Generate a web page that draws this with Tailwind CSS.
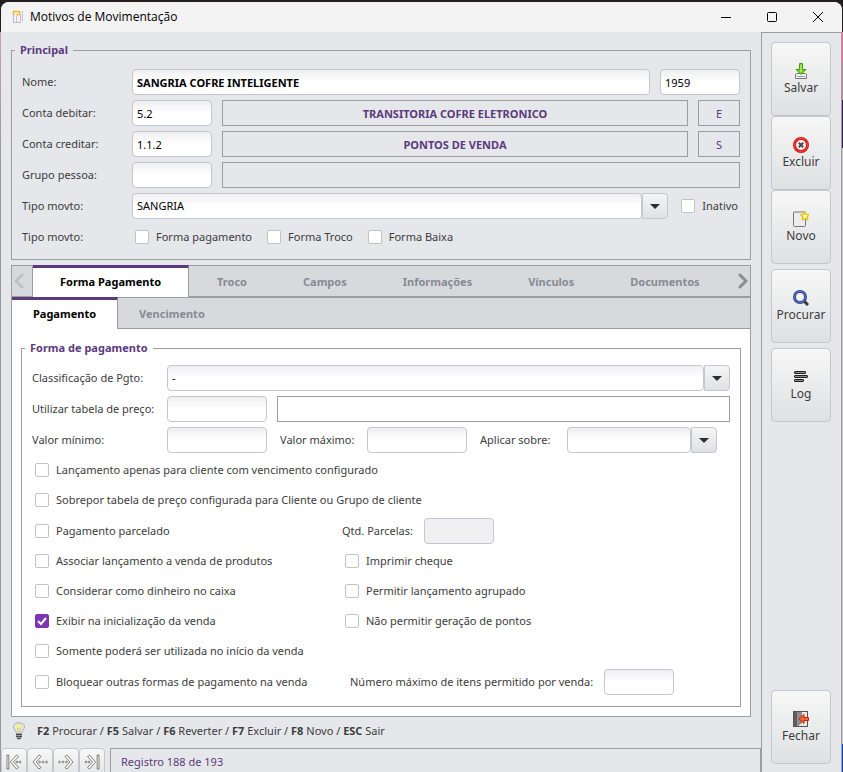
<!DOCTYPE html>
<html lang="pt-BR">
<head>
    <meta charset="UTF-8">
    <meta name="viewport" content="width=device-width, initial-scale=1.0">
    <title>Motivos de Movimentação</title>
    <script src="https://cdn.jsdelivr.net/npm/@tailwindcss/browser@4"></script>
</head>
<body class="flex min-h-screen bg-[#231f20] font-['Noto_Sans',sans-serif] text-[11px] leading-4 text-[#3c3c3c]">

    <!-- Borda esquerda (fundo atrás da janela) -->
    <div class="w-px shrink-0 bg-linear-to-b from-[#231f20] from-[32px] via-[#c9a0a8] via-[32px] to-[#9a9a9e] to-[160px]"></div>

    <div class="mt-0.5 flex min-w-0 flex-1 flex-col overflow-hidden rounded-t-lg bg-[#e6e7eb]">

        <!-- Barra de título -->
        <header class="flex h-[30px] items-center bg-[#f3f3f3] pr-px pl-[11px] text-black">
            <svg class="size-3.5" viewBox="0 0 14 14" fill="none" aria-hidden="true">
                <path d="M1.500 12.500V3.500M1 12.500h8M8.500 12.500V5" stroke="#c3b4d0"/>
                <path d="M1.500 5V1.500h6V4M4.500 4.500h4" stroke="#f5b92e" stroke-width="1.500"/>
                <path d="M4.500 12V5.500M9 1.500l1.500 1.500v8M10.500 1v10.500" stroke="#c9bcd6"/>
            </svg>
            <h1 class="ml-1 flex-1 font-['Open_Sans',sans-serif] text-xs">Motivos de Movimentação</h1>
            <div class="flex">
                <button type="button" aria-label="Minimizar" class="flex h-[30px] w-[46px] items-center justify-center">
                    <svg class="size-3" viewBox="0 0 12 12" stroke="currentColor"><path d="M1 6.500h10"/></svg>
                </button>
                <button type="button" aria-label="Maximizar" class="flex h-[30px] w-[46px] items-center justify-center">
                    <svg class="size-3" viewBox="0 0 12 12" fill="none" stroke="currentColor"><rect x="1.500" y="1.500" width="9" height="9" rx="1"/></svg>
                </button>
                <button type="button" aria-label="Fechar janela" class="flex h-[30px] w-[46px] items-center justify-center">
                    <svg class="size-3" viewBox="0 0 12 12" stroke="currentColor"><path d="M1 1l10 10M11 1L1 11"/></svg>
                </button>
            </div>
        </header>

        <div class="flex flex-1">
            <div class="flex min-w-0 flex-1 flex-col">
                <main class="flex flex-1 flex-col px-2.5 pt-2.5">

                    <!-- Principal -->
                    <fieldset class="min-w-0 border border-[#9d9d9d]">
                        <legend class="ml-[3px] px-[5px] font-bold text-[#5c3a7d]">Principal</legend>
                        <div class="flex flex-col gap-[5px] px-2.5 pt-[11px] pb-[9px]">
                            <div class="flex items-center gap-2.5">
                                <label for="nome" class="w-[100px] shrink-0">Nome:</label>
                                <input id="nome" type="text" value="SANGRIA COFRE INTELIGENTE" class="h-[26px] min-w-0 flex-1 rounded border border-[#c5c6cf] bg-linear-to-b from-[#efeff2] to-white to-50% px-1 font-bold text-black">
                                <input type="text" aria-label="Código" value="1959" class="h-[26px] w-20 rounded border border-[#c5c6cf] bg-linear-to-b from-[#efeff2] to-white to-50% px-1 text-black">
                            </div>
                            <div class="flex items-center gap-2.5">
                                <label for="debitar" class="w-[100px] shrink-0">Conta debitar:</label>
                                <input id="debitar" type="text" value="5.2" class="h-[26px] w-20 rounded border border-[#c5c6cf] bg-linear-to-b from-[#efeff2] to-white to-50% px-1 text-black">
                                <output class="h-[26px] flex-1 border border-[#9d9d9d] text-center leading-[26px] font-bold text-[#5c3a7d]">TRANSITORIA COFRE ELETRONICO</output>
                                <output class="h-[26px] w-[42px] border border-[#9d9d9d] text-center leading-[26px] text-[#5c3a7d]">E</output>
                            </div>
                            <div class="flex items-center gap-2.5">
                                <label for="creditar" class="w-[100px] shrink-0">Conta creditar:</label>
                                <input id="creditar" type="text" value="1.1.2" class="h-[26px] w-20 rounded border border-[#c5c6cf] bg-linear-to-b from-[#efeff2] to-white to-50% px-1 text-black">
                                <output class="h-[26px] flex-1 border border-[#9d9d9d] text-center leading-[26px] font-bold text-[#5c3a7d]">PONTOS DE VENDA</output>
                                <output class="h-[26px] w-[42px] border border-[#9d9d9d] text-center leading-[26px] text-[#5c3a7d]">S</output>
                            </div>
                            <div class="flex items-center gap-2.5">
                                <label for="grupo" class="w-[100px] shrink-0">Grupo pessoa:</label>
                                <input id="grupo" type="text" class="h-[26px] w-20 rounded border border-[#c5c6cf] bg-linear-to-b from-[#efeff2] to-white to-50% px-1 text-black">
                                <output class="h-[26px] flex-1 border border-[#9d9d9d]"></output>
                            </div>
                            <div class="flex items-center gap-2.5">
                                <label for="tipo" class="w-[100px] shrink-0">Tipo movto:</label>
                                <div class="flex min-w-0 flex-1">
                                    <select id="tipo" class="h-[26px] min-w-0 flex-1 appearance-none rounded border border-[#c5c6cf] bg-linear-to-b from-[#efeff2] to-white to-50% px-1 text-black">
                                        <option>SANGRIA</option>
                                    </select>
                                    <button type="button" aria-label="Abrir lista" class="flex h-[26px] w-[26px] items-center justify-center rounded-r border border-[#c5c6cf] bg-linear-to-b from-[#f5f5f5] to-[#e0e1e3]">
                                        <svg class="h-[5px] w-2.5" viewBox="0 0 10 5"><path d="M0 0h10L5 5z" fill="#2b2f33"/></svg>
                                    </button>
                                </div>
                                <label class="ml-[3px] flex items-center gap-[7px] pr-0.5">
                                    <input type="checkbox" class="size-3.5 appearance-none rounded-xs border border-[#c3c3c0] bg-white">Inativo
                                </label>
                            </div>
                            <div class="flex h-[26px] items-center">
                                <span class="w-[113px]">Tipo movto:</span>
                                <div class="flex gap-[15px]">
                                    <label class="flex items-center gap-[7px]">
                                        <input type="checkbox" class="size-3.5 appearance-none rounded-xs border border-[#c3c3c0] bg-white">Forma pagamento
                                    </label>
                                    <label class="flex items-center gap-[7px]">
                                        <input type="checkbox" class="size-3.5 appearance-none rounded-xs border border-[#c3c3c0] bg-white">Forma Troco
                                    </label>
                                    <label class="flex items-center gap-[7px]">
                                        <input type="checkbox" class="size-3.5 appearance-none rounded-xs border border-[#c3c3c0] bg-white">Forma Baixa
                                    </label>
                                </div>
                            </div>
                        </div>
                    </fieldset>

                    <!-- Abas -->
                    <section class="mt-[5px] flex flex-1 flex-col border border-t-0 border-[#9d9d9d] bg-white">
                        <div role="tablist" class="flex h-8 border-y border-[#9d9d9d] bg-[#d8d9dd] font-bold text-[#868b93]">
                            <button type="button" aria-label="Abas anteriores" class="flex w-[21px] items-center justify-center border-r border-[#9d9d9d] pr-1.5">
                                <svg class="h-4 w-2.5" viewBox="0 0 10 16" fill="none" stroke="#c0c1c4" stroke-width="3" stroke-linecap="round"><path d="M8 2L2 8l6 6"/></svg>
                            </button>
                            <button type="button" role="tab" aria-selected="true" class="-my-px border-t-3 border-r border-t-[#5c3a7d] border-r-[#9d9d9d] bg-white px-[27px] pb-0.5 text-black">Forma Pagamento</button>
                            <button type="button" role="tab" class="px-7 pt-0.5">Troco</button>
                            <button type="button" role="tab" class="px-7 pt-0.5">Campos</button>
                            <button type="button" role="tab" class="px-7 pt-0.5">Informações</button>
                            <button type="button" role="tab" class="px-7 pt-0.5">Vínculos</button>
                            <button type="button" role="tab" class="px-7 pt-0.5">Documentos</button>
                            <button type="button" aria-label="Próximas abas" class="ml-auto pr-0.5">
                                <svg class="h-4 w-2.5" viewBox="0 0 10 16" fill="none" stroke="#8d8d8f" stroke-width="3" stroke-linecap="round"><path d="M2 2l6 6-6 6"/></svg>
                            </button>
                        </div>
                        <div role="tablist" class="flex h-8 border-b border-[#9d9d9d] bg-[#d8d9dd] font-bold text-[#868b93]">
                            <button type="button" role="tab" aria-selected="true" class="-mb-px border-t-3 border-r border-t-[#5c3a7d] border-r-[#9d9d9d] bg-white px-[21px] pb-0.5 text-black">Pagamento</button>
                            <button type="button" role="tab" class="border-t border-[#9d9d9d] px-[21px] pt-0.5">Vencimento</button>
                            <div class="flex-1 border-t border-[#9d9d9d]"></div>
                        </div>

                        <div class="px-[9px] pt-[11px] pb-[9px]">
                            <fieldset class="min-w-0 border border-[#9d9d9d]">
                                <legend class="ml-[3px] px-[5px] font-bold text-[#5c3a7d]">Forma de pagamento</legend>
                                <div class="px-2.5 pt-[9px] pb-[9px]">
                                    <div class="flex flex-col gap-[5px]">
                                        <div class="flex items-center">
                                            <label for="classificacao" class="w-[135px] shrink-0">Classificação de Pgto:</label>
                                            <select id="classificacao" class="h-[26px] min-w-0 flex-1 appearance-none rounded border border-[#c5c6cf] bg-linear-to-b from-[#efeff2] to-white to-50% px-1 text-black">
                                                <option>-</option>
                                            </select>
                                            <button type="button" aria-label="Abrir lista" class="flex h-[26px] w-[26px] items-center justify-center rounded-r border border-[#c5c6cf] bg-linear-to-b from-[#f5f5f5] to-[#e0e1e3]">
                                                <svg class="h-[5px] w-2.5" viewBox="0 0 10 5"><path d="M0 0h10L5 5z" fill="#2b2f33"/></svg>
                                            </button>
                                        </div>
                                        <div class="flex items-center">
                                            <label for="tabela" class="w-[135px] shrink-0">Utilizar tabela de preço:</label>
                                            <input id="tabela" type="text" class="h-[26px] w-[100px] rounded border border-[#c5c6cf] bg-linear-to-b from-[#efeff2] to-white to-50% px-1 text-black">
                                            <output class="ml-2.5 h-[26px] flex-1 border border-[#9d9d9d]"></output>
                                        </div>
                                        <div class="flex items-center">
                                            <label for="minimo" class="w-[135px] shrink-0">Valor mínimo:</label>
                                            <input id="minimo" type="text" class="h-[26px] w-[100px] rounded border border-[#c5c6cf] bg-linear-to-b from-[#efeff2] to-white to-50% px-1 text-black">
                                            <label for="maximo" class="w-[100px] shrink-0 pl-[13px]">Valor máximo:</label>
                                            <input id="maximo" type="text" class="h-[26px] w-[100px] rounded border border-[#c5c6cf] bg-linear-to-b from-[#efeff2] to-white to-50% px-1 text-black">
                                            <label for="aplicar" class="w-[100px] shrink-0 pl-[13px]">Aplicar sobre:</label>
                                            <select id="aplicar" class="h-[26px] w-[124px] appearance-none rounded border border-[#c5c6cf] bg-linear-to-b from-[#efeff2] to-white to-50% px-1 text-black">
                                                <option></option>
                                            </select>
                                            <button type="button" aria-label="Abrir lista" class="flex h-[26px] w-[26px] items-center justify-center rounded-r border border-[#c5c6cf] bg-linear-to-b from-[#f5f5f5] to-[#e0e1e3]">
                                                <svg class="h-[5px] w-2.5" viewBox="0 0 10 5"><path d="M0 0h10L5 5z" fill="#2b2f33"/></svg>
                                            </button>
                                        </div>
                                    </div>

                                    <div class="mt-0.5 flex flex-col">
                                        <label class="flex h-[30px] items-center gap-[7px] pl-[3px]">
                                            <input type="checkbox" class="size-3.5 appearance-none rounded-xs border border-[#c3c3c0] bg-white">Lançamento apenas para cliente com vencimento configurado
                                        </label>
                                        <label class="flex h-[30px] items-center gap-[7px] pl-[3px]">
                                            <input type="checkbox" class="size-3.5 appearance-none rounded-xs border border-[#c3c3c0] bg-white">Sobrepor tabela de preço configurada para Cliente ou Grupo de cliente
                                        </label>
                                        <div class="grid h-[31px] grid-cols-[310px_1fr] items-center">
                                            <label class="flex items-center gap-[7px] pl-[3px]">
                                                <input type="checkbox" class="size-3.5 appearance-none rounded-xs border border-[#c3c3c0] bg-white">Pagamento parcelado
                                            </label>
                                            <div class="flex items-center gap-[11px]">
                                                <label for="parcelas">Qtd. Parcelas:</label>
                                                <input id="parcelas" type="text" disabled class="h-[26px] w-[70px] rounded border border-[#c5c6cf] bg-[#f0f0f2] px-1">
                                            </div>
                                        </div>
                                        <div class="grid h-[30px] grid-cols-[310px_1fr] items-center">
                                            <label class="flex items-center gap-[7px] pl-[3px]">
                                                <input type="checkbox" class="size-3.5 appearance-none rounded-xs border border-[#c3c3c0] bg-white">Associar lançamento a venda de produtos
                                            </label>
                                            <label class="flex items-center gap-[7px] pl-[3px]">
                                                <input type="checkbox" class="size-3.5 appearance-none rounded-xs border border-[#c3c3c0] bg-white">Imprimir cheque
                                            </label>
                                        </div>
                                        <div class="grid h-[30px] grid-cols-[310px_1fr] items-center">
                                            <label class="flex items-center gap-[7px] pl-[3px]">
                                                <input type="checkbox" class="size-3.5 appearance-none rounded-xs border border-[#c3c3c0] bg-white">Considerar como dinheiro no caixa
                                            </label>
                                            <label class="flex items-center gap-[7px] pl-[3px]">
                                                <input type="checkbox" class="size-3.5 appearance-none rounded-xs border border-[#c3c3c0] bg-white">Permitir lançamento agrupado
                                            </label>
                                        </div>
                                        <div class="grid h-[30px] grid-cols-[310px_1fr] items-center">
                                            <label class="flex items-center gap-[7px] pl-[3px]">
                                                <span class="grid size-3.5">
                                                    <input type="checkbox" checked class="peer col-start-1 row-start-1 size-3.5 appearance-none rounded-xs border border-[#c3c3c0] bg-white checked:border-[#7f35b2] checked:bg-[#7f35b2]">
                                                    <svg class="pointer-events-none invisible col-start-1 row-start-1 size-3.5 peer-checked:visible" viewBox="0 0 14 14" fill="none" stroke="#fff" stroke-width="2"><path d="M3 7l3 3 5-6"/></svg>
                                                </span>Exibir na inicialização da venda
                                            </label>
                                            <label class="flex items-center gap-[7px] pl-[3px]">
                                                <input type="checkbox" class="size-3.5 appearance-none rounded-xs border border-[#c3c3c0] bg-white">Não permitir geração de pontos
                                            </label>
                                        </div>
                                        <label class="flex h-[30px] items-center gap-[7px] pl-[3px]">
                                            <input type="checkbox" class="size-3.5 appearance-none rounded-xs border border-[#c3c3c0] bg-white">Somente poderá ser utilizada no início da venda
                                        </label>
                                        <div class="grid h-[31px] grid-cols-[310px_1fr] items-center">
                                            <label class="flex items-center gap-[7px] pl-[3px]">
                                                <input type="checkbox" class="size-3.5 appearance-none rounded-xs border border-[#c3c3c0] bg-white">Bloquear outras formas de pagamento na venda
                                            </label>
                                            <div class="flex items-center gap-[11px] pl-2">
                                                <label for="itens">Número máximo de itens permitido por venda:</label>
                                                <input id="itens" type="text" class="h-[26px] w-[70px] rounded border border-[#c5c6cf] bg-linear-to-b from-[#efeff2] to-white to-50% px-1 text-black">
                                            </div>
                                        </div>
                                    </div>
                                </div>
                            </fieldset>
                        </div>
                    </section>

                    <!-- Atalhos -->
                    <div class="flex h-[31px] items-center gap-2.5 pb-1">
                        <svg class="h-[18px] w-4" viewBox="0 0 16 18" aria-hidden="true">
                            <path d="M2.500 4.500c0-5 11-5 11 0 0 3-2.500 4-3 7h-5c-.5-3-3-4-3-7z" fill="#e6e6de" stroke="#b0b0aa"/>
                            <path d="M4.500 4c1-2 6-2 7 0L10 6H6z" fill="#f5ee8b"/>
                            <path d="M7 6v5M9 6v5" stroke="#cfc985"/>
                            <path d="M5 11h6v4l-1.500 2.500h-3L5 15z" fill="#9a9a9a"/>
                            <path d="M5 12.500h6M5 14.500h6M6.500 16.500h3" stroke="#4c4c4c"/>
                        </svg>
                        <p><b>F2</b> Procurar / <b>F5</b> Salvar / <b>F6</b> Reverter / <b>F7</b> Excluir / <b>F8</b> Novo / <b>ESC</b> Sair</p>
                    </div>
                </main>

                <!-- Navegação de registros -->
                <footer class="flex h-6 items-start overflow-hidden">
                    <button type="button" aria-label="Primeiro" class="flex h-7 w-[26px] shrink-0 items-center justify-center rounded border border-[#c5c6cf] bg-linear-to-b from-[#f8f8f8] to-[#e4e5e7]">
                        <svg class="size-4" viewBox="0 0 16 16" fill="#fff" stroke="#5f5f59" stroke-width=".8"><path d="M1 1h1.800v14H1zM10.500 1l2 1.500L7.500 8l5 5.500-2 1.500L4.500 8z"/><circle cx="11" cy="8" r=".9"/><circle cx="14" cy="8" r=".9"/></svg>
                    </button>
                    <button type="button" aria-label="Anterior" class="flex h-7 w-[26px] shrink-0 items-center justify-center rounded border border-[#c5c6cf] bg-linear-to-b from-[#f8f8f8] to-[#e4e5e7]">
                        <svg class="size-4" viewBox="0 0 16 16" fill="#fff" stroke="#5f5f59" stroke-width=".8"><path d="M7 1l2 1.500L4 8l5 5.500L7 15 1 8z"/><circle cx="7.500" cy="8" r=".9"/><circle cx="11" cy="8" r=".9"/><circle cx="14.500" cy="8" r=".9"/></svg>
                    </button>
                    <button type="button" aria-label="Próximo" class="flex h-7 w-[26px] shrink-0 items-center justify-center rounded border border-[#c5c6cf] bg-linear-to-b from-[#f8f8f8] to-[#e4e5e7]">
                        <svg class="size-4" viewBox="0 0 16 16" fill="#fff" stroke="#5f5f59" stroke-width=".8"><path d="M9 1L7 2.500 12 8l-5 5.500L9 15l6-7z"/><circle cx="8.500" cy="8" r=".9"/><circle cx="5" cy="8" r=".9"/><circle cx="1.500" cy="8" r=".9"/></svg>
                    </button>
                    <button type="button" aria-label="Último" class="flex h-7 w-[26px] shrink-0 items-center justify-center rounded border border-[#c5c6cf] bg-linear-to-b from-[#f8f8f8] to-[#e4e5e7]">
                        <svg class="size-4" viewBox="0 0 16 16" fill="#fff" stroke="#5f5f59" stroke-width=".8"><path d="M13.200 1H15v14h-1.800zM5.500 1l-2 1.500L8.500 8l-5 5.500 2 1.500 6-7z"/><circle cx="5" cy="8" r=".9"/><circle cx="2" cy="8" r=".9"/></svg>
                    </button>
                    <div class="ml-[5px] h-7 flex-1 border border-[#9d9d9d] pl-2.5 leading-[26px] text-[#5c3a7d]">Registro 188 de 193</div>
                </footer>
            </div>

            <!-- Barra lateral -->
            <aside class="flex w-[81px] shrink-0 flex-col border border-b-0 border-[#9d9d9d] px-[9px] pt-[9px] pb-2 text-xs leading-4">
                <button type="button" class="flex h-[74px] w-[60px] flex-col items-center justify-center gap-px rounded-sm border border-[#c5c6cf] bg-linear-to-b from-[#f7f7f7] to-[#dfe0e2] pt-px">
                    <svg class="size-4" viewBox="0 0 16 16" aria-hidden="true">
                        <path d="M2.500 11.500l1.500-1h8l1.500 1v4h-11z" fill="#f4f4f4" stroke="#777"/>
                        <path d="M4 13.500h8" stroke="#999"/>
                        <path d="M6.500.5h3v6H13l-5 5-5-5h3.500z" fill="#7ed321" stroke="#3f9c12"/>
                        <path d="M8 2v7" stroke="#c5f58d"/>
                    </svg>
                    Salvar
                </button>
                <button type="button" class="flex h-[74px] w-[60px] flex-col items-center justify-center gap-px rounded-sm border border-[#c5c6cf] bg-linear-to-b from-[#f7f7f7] to-[#dfe0e2] pt-px">
                    <svg class="size-4" viewBox="0 0 16 16" fill="none" aria-hidden="true">
                        <circle cx="8" cy="8" r="6.500" fill="#f3f3f3" stroke="#d8161b" stroke-width="3"/>
                        <circle cx="8" cy="8" r="6.500" stroke="#f0484b"/>
                        <path d="M5.800 5.800l4.400 4.400M10.200 5.800l-4.400 4.400" stroke="#4a4a4a" stroke-width="2"/>
                    </svg>
                    Excluir
                </button>
                <button type="button" class="flex h-[74px] w-[60px] flex-col items-center justify-center gap-px rounded-sm border border-[#c5c6cf] bg-linear-to-b from-[#f7f7f7] to-[#dfe0e2] pt-px">
                    <svg class="size-4" viewBox="0 0 16 16" aria-hidden="true">
                        <rect x=".5" y="1" width="12" height="14.500" rx="1" fill="#ededed" stroke="#777"/>
                        <path d="M12 1l1.300 2.400 2.700.5-1.900 2 .4 2.700L12 7.500 9.500 8.600l.4-2.700-1.900-2 2.700-.5z" fill="#fffbd0" stroke="#e3c80e" stroke-width="1.500"/>
                    </svg>
                    Novo
                </button>
                <button type="button" class="mt-[5px] flex h-[74px] w-[60px] flex-col items-center justify-center gap-px rounded-sm border border-[#c5c6cf] bg-linear-to-b from-[#f7f7f7] to-[#dfe0e2] pt-px">
                    <svg class="size-4" viewBox="0 0 16 16" fill="none" aria-hidden="true">
                        <path d="M11 11l4 4" stroke="#3b382f" stroke-width="3"/>
                        <circle cx="7" cy="7" r="5.500" fill="#f2f2f4" stroke="#2c3f92" stroke-width="3"/>
                        <circle cx="7" cy="7" r="5.500" stroke="#6b80d0"/>
                    </svg>
                    Procurar
                </button>
                <button type="button" class="mt-[5px] flex h-[74px] w-[60px] flex-col items-center justify-center gap-px rounded-sm border border-[#c5c6cf] bg-linear-to-b from-[#f7f7f7] to-[#dfe0e2] pt-px">
                    <svg class="size-4" viewBox="0 0 16 16" fill="#8d8d86" stroke="#222" aria-hidden="true">
                        <rect x="1.500" y="2.500" width="11" height="2" rx=".5"/>
                        <rect x="1.500" y="6.500" width="13" height="2" rx=".5"/>
                        <rect x="1.500" y="10.500" width="9" height="2" rx=".5"/>
                    </svg>
                    Log
                </button>
                <button type="button" class="mt-auto flex h-[74px] w-[60px] flex-col items-center justify-center gap-px rounded-sm border border-[#c5c6cf] bg-linear-to-b from-[#f7f7f7] to-[#dfe0e2] pt-px">
                    <svg class="size-4" viewBox="0 0 16 16" aria-hidden="true">
                        <rect x=".5" y=".5" width="14" height="15" fill="#e8e8e8" stroke="#555"/>
                        <path d="M1 1h8v11l-4 3H1z" fill="#8c8c8c"/>
                        <path d="M1 1h3v14H1z" fill="#5e5e5e"/>
                        <path d="M6 8l5-4.500V6.500h4.500v3H11v3z" fill="#f4622d" stroke="#c81e12"/>
                    </svg>
                    Fechar
                </button>
            </aside>
        </div>
    </div>

    <!-- Borda direita -->
    <div class="flex w-px shrink-0 flex-col">
        <div class="h-8 bg-[#231f20]"></div>
        <div class="h-[30px] bg-[#f0709c]"></div>
        <div class="h-[38px] bg-[#b98d9c]"></div>
        <div class="h-12 bg-[#3b1d52]"></div>
        <div class="flex-1 bg-[#c8c8c8]"></div>
        <div class="h-7 bg-[#0a50b8]"></div>
    </div>

</body>
</html>
